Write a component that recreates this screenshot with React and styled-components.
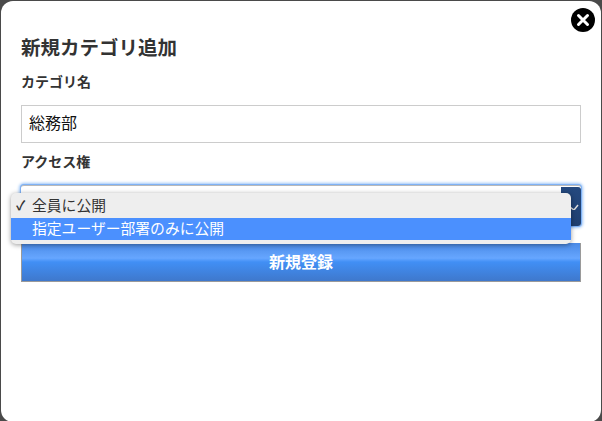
import styled, { createGlobalStyle } from 'styled-components';

const Global = createGlobalStyle`
	html, body {
		margin: 0;
		padding: 0;
		height: 421px;
		overflow: hidden;
		background: #4a4a4a;
		font-family: 'Liberation Sans', 'Noto Sans CJK JP', sans-serif;
	}
`;

const Modal = styled.div`
	position: relative;
	box-sizing: border-box;
	width: 600px;
	height: 421px;
	margin: 1px 1px 0;
	padding: 37px 20px 0;
	background: #fff;
	border-radius: 12px;
	color: #333;
`;

const CloseButton = styled.div`
	position: absolute;
	top: 7px;
	right: 6px;
	width: 24px;
	height: 24px;
	svg {
		display: block;
	}
`;

const Title = styled.h2`
	margin: 0 0 15px;
	font-size: 19.5px;
	line-height: 20px;
	font-weight: 700;
`;

const Label = styled.label`
	display: block;
	height: 20px;
	margin-bottom: 12px;
	font-size: 14px;
	line-height: 19px;
	font-weight: 700;
`;

const TextField = styled.div`
	box-sizing: border-box;
	height: 38px;
	margin-bottom: 10px;
	padding: 0 7px;
	border: 1px solid #ccc;
	font-size: 16px;
	line-height: 36px;
	color: #111;
`;

const SelectWrap = styled.div`
	position: relative;
	margin-bottom: 17px;
`;

const SelectBox = styled.div`
	box-sizing: border-box;
	display: flex;
	justify-content: flex-end;
	height: 41px;
	padding-top: 1px;
	border-radius: 3px;
	border-top: 1px solid #b9b9b9;
	background: #fff;
	box-shadow: 0 0 0 1px #7fb2f5, 0 0 3px 2px #9cc5f8;
`;

const SelectArrow = styled.div`
	position: relative;
	width: 20px;
	border-radius: 0 3px 3px 0;
	background: linear-gradient(#24497f, #1f3f70);
	svg {
		position: absolute;
		right: 2px;
		top: 13px;
	}
`;

const Menu = styled.ul`
	position: absolute;
	top: 8px;
	left: -10px;
	width: 560px;
	margin: 0;
	padding: 0 0 4px;
	list-style: none;
	border-radius: 5px;
	background: #eeeeee;
	box-shadow: 0 1px 5px rgba(0, 0, 0, 0.4);
`;

const MenuItem = styled.li`
	display: flex;
	align-items: center;
	box-sizing: border-box;
	height: ${(p) => (p.$active ? '22px' : '25px')};
	padding: 0 0 ${(p) => (p.$active ? '3px' : '2px')} 5px;
	font-size: 14.8px;
	color: ${(p) => (p.$active ? '#fff' : '#333')};
	background: ${(p) => (p.$active ? '#4b90fe' : 'transparent')};
`;

const Check = styled.span`
	width: 16px;
	font-size: 13px;
	font-weight: 700;
`;

const SubmitButton = styled.button`
	display: block;
	box-sizing: border-box;
	width: 100%;
	height: 39px;
	padding: 0 0 3px;
	border: 1px solid #9a9a9a;
	border-top: none;
	background: linear-gradient(#4a8ae6 0%, #66a6ff 40%, #418ff5 50%, #3f78cc 100%);
	color: #fff;
	font-family: inherit;
	font-size: 16px;
	font-weight: 700;
`;

export default function App() {
	return (
		<>
			<Global />
			<Modal>
				<CloseButton>
					<svg width="24" height="24" viewBox="0 0 24 24">
						<circle cx="12" cy="12" r="12" fill="#000" />
						<path d="M7.5 7.5 L16.5 16.5 M16.5 7.5 L7.5 16.5" stroke="#fff" strokeWidth="3" strokeLinecap="round" />
					</svg>
				</CloseButton>
				<Title>新規カテゴリ追加</Title>
				<Label>カテゴリ名</Label>
				<TextField>総務部</TextField>
				<Label>アクセス権</Label>
				<SelectWrap>
					<SelectBox>
						<SelectArrow>
							<svg width="10" height="10" viewBox="0 0 10 10">
								<path d="M1 7 L5 10 L9 5" stroke="#ddd" strokeWidth="1.5" fill="none" />
							</svg>
						</SelectArrow>
					</SelectBox>
					<Menu>
						<MenuItem>
							<Check>✓</Check>全員に公開
						</MenuItem>
						<MenuItem $active>
							<Check />指定ユーザー部署のみに公開
						</MenuItem>
					</Menu>
				</SelectWrap>
				<SubmitButton>新規登録</SubmitButton>
			</Modal>
		</>
	);
}
